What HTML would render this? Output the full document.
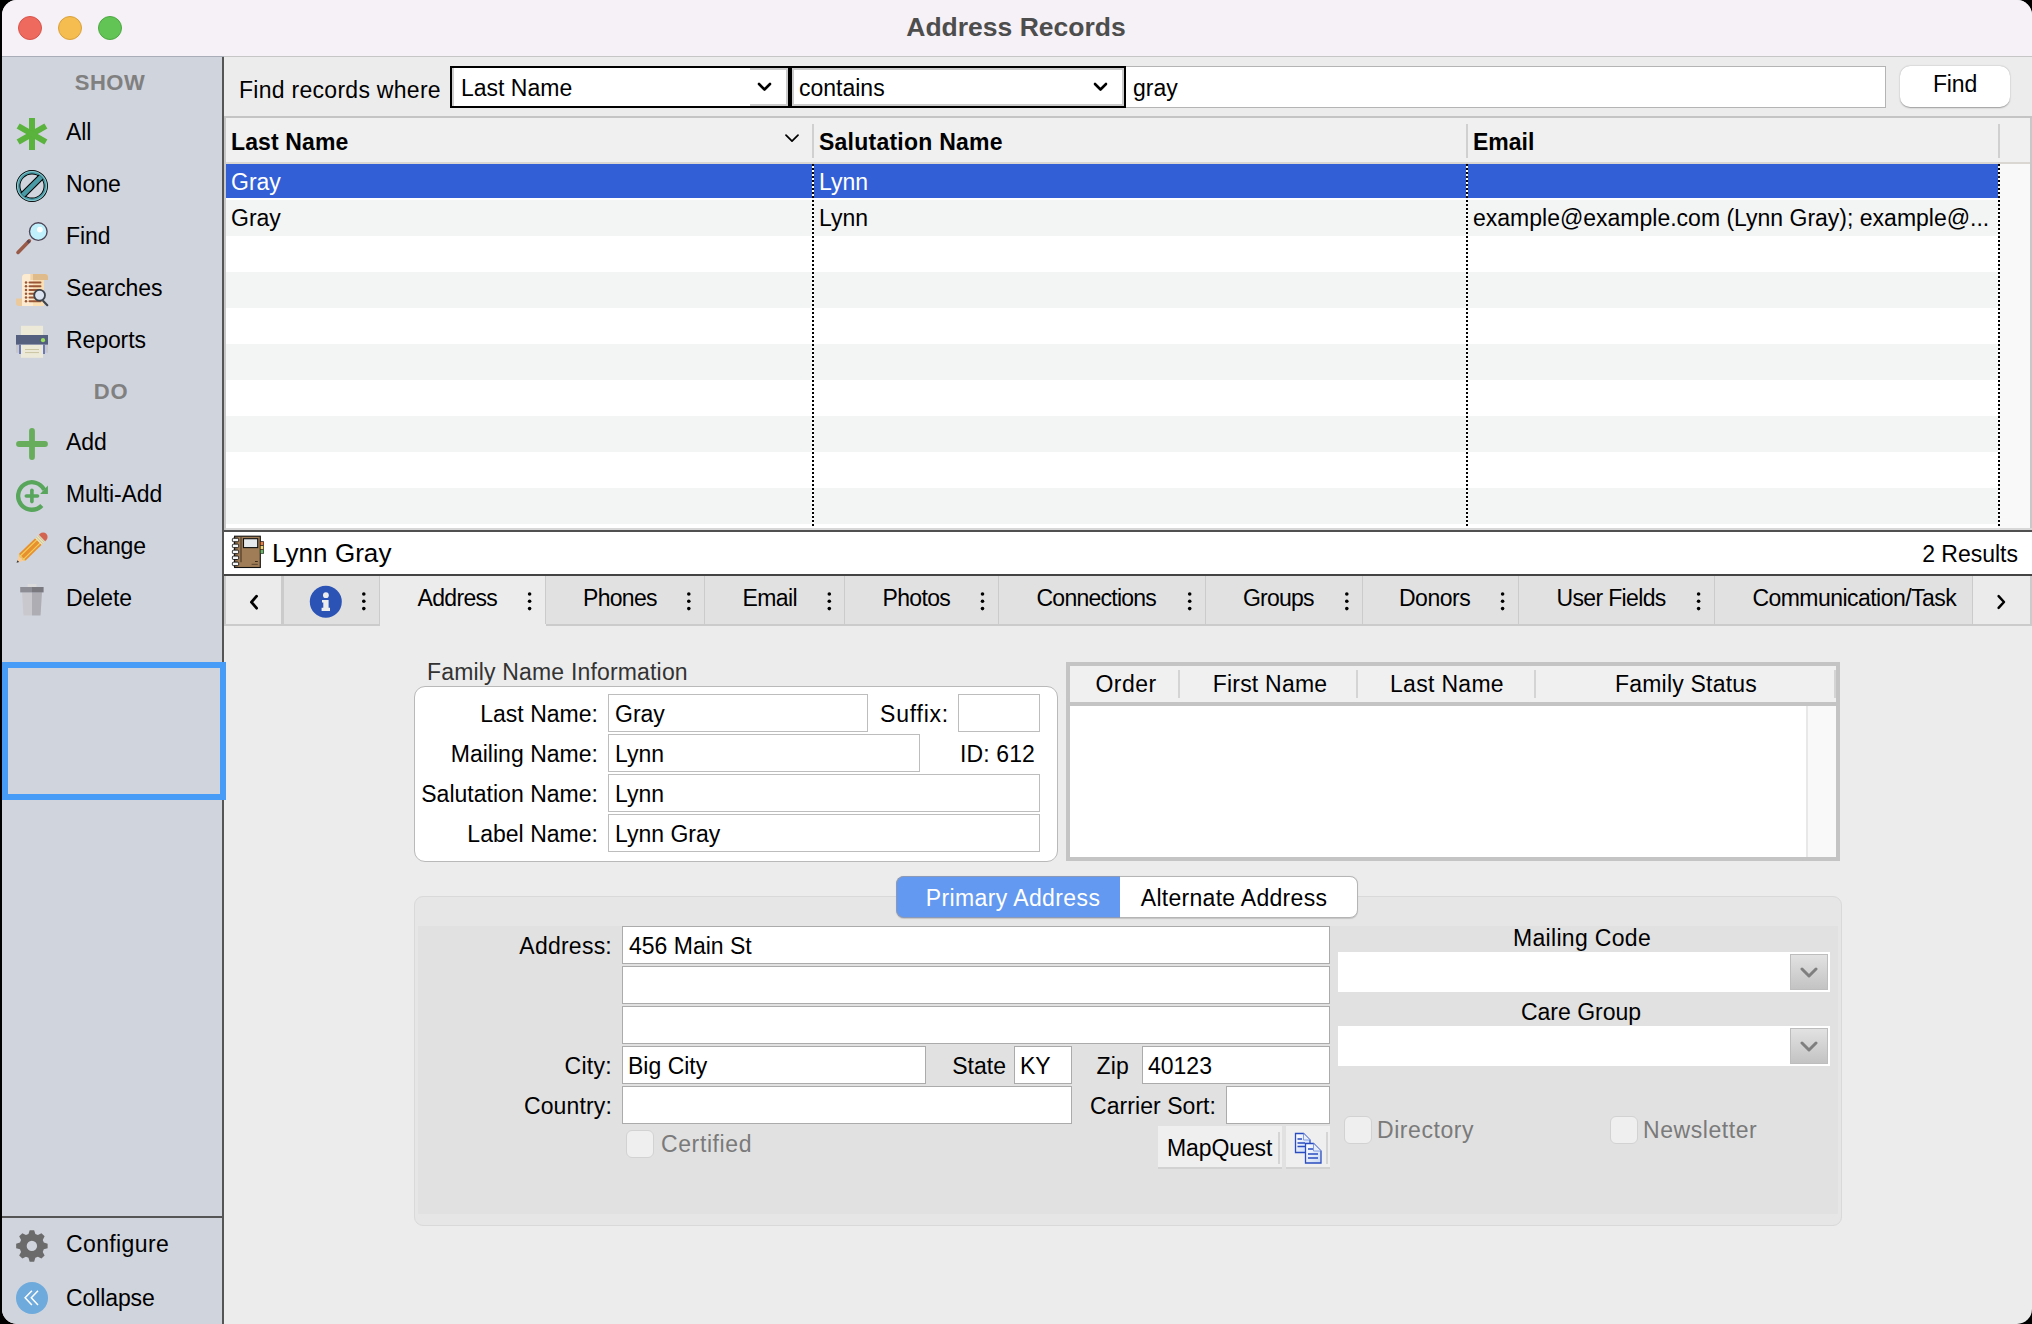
<!DOCTYPE html><html><head><meta charset="utf-8"><style>
html,body{margin:0;padding:0;}
body{width:2032px;height:1324px;background:#000;position:relative;overflow:hidden;font-family:"Liberation Sans", sans-serif;}
#win{position:absolute;left:2px;top:0;width:2030px;height:1324px;border-radius:15px;overflow:hidden;background:#ececec;}
#c{position:absolute;left:-2px;top:0;width:2032px;height:1324px;}
.t{position:absolute;white-space:pre;}
.b{position:absolute;box-sizing:border-box;}
</style></head><body><div id="win"><div id="c">

<div class="b" style="left:0px;top:0px;width:2032px;height:56px;background:#f6f1f6;"></div>
<div class="b" style="left:0px;top:56px;width:224px;height:1px;background:#a9adb7;"></div>
<div class="b" style="left:224px;top:56px;width:1808px;height:1px;background:#c6c6c6;"></div>
<div class="b" style="left:18px;top:16px;width:24px;height:24px;border-radius:50%;background:#ee6a5f;border:1px solid #d9534a;"></div>
<div class="b" style="left:58px;top:16px;width:24px;height:24px;border-radius:50%;background:#f5bd4f;border:1px solid #d9a13a;"></div>
<div class="b" style="left:98px;top:16px;width:24px;height:24px;border-radius:50%;background:#61c454;border:1px solid #4ea843;"></div>
<div class="t" style="left:516px;width:1000px;text-align:center;top:13.57px;font-size:26.5px;line-height:26.5px;color:#4d4d4d;font-weight:bold;">Address Records</div>
<div class="b" style="left:0px;top:57px;width:222px;height:1267px;background:#d0d4dd;"></div>
<div class="b" style="left:222px;top:57px;width:2px;height:1267px;background:#555;"></div>
<div class="b" style="left:0px;top:1216px;width:222px;height:2px;background:#555;"></div>
<div class="t" style="left:-390px;width:1000px;text-align:center;top:72.38px;font-size:22px;line-height:22px;color:#808080;font-weight:bold;letter-spacing:0.47px;">SHOW</div>
<div class="t" style="left:-389px;width:1000px;text-align:center;top:381.38px;font-size:22px;line-height:22px;color:#808080;font-weight:bold;letter-spacing:0.8px;">DO</div>
<div class="t" style="left:66px;top:120.53px;font-size:23px;line-height:23px;color:#000;letter-spacing:-0.1px;">All</div>
<div class="t" style="left:66px;top:172.53px;font-size:23px;line-height:23px;color:#000;letter-spacing:-0.1px;">None</div>
<div class="t" style="left:66px;top:224.53px;font-size:23px;line-height:23px;color:#000;letter-spacing:-0.1px;">Find</div>
<div class="t" style="left:66px;top:276.53px;font-size:23px;line-height:23px;color:#000;letter-spacing:-0.1px;">Searches</div>
<div class="t" style="left:66px;top:328.53px;font-size:23px;line-height:23px;color:#000;letter-spacing:-0.1px;">Reports</div>
<div class="t" style="left:66px;top:430.53px;font-size:23px;line-height:23px;color:#000;letter-spacing:-0.1px;">Add</div>
<div class="t" style="left:66px;top:482.53px;font-size:23px;line-height:23px;color:#000;letter-spacing:-0.1px;">Multi-Add</div>
<div class="t" style="left:66px;top:534.53px;font-size:23px;line-height:23px;color:#000;letter-spacing:-0.1px;">Change</div>
<div class="t" style="left:66px;top:586.53px;font-size:23px;line-height:23px;color:#000;letter-spacing:-0.1px;">Delete</div>
<div class="t" style="left:66px;top:1232.53px;font-size:23px;line-height:23px;color:#000;letter-spacing:0.38px;">Configure</div>
<div class="t" style="left:66px;top:1286.53px;font-size:23px;line-height:23px;color:#000;letter-spacing:-0.1px;">Collapse</div>
<div class="b" style="left:2px;top:662px;width:224px;height:138px;border:6px solid #479cf7;"></div>
<svg class="b" style="left:0;top:0" width="300" height="1324" viewBox="0 0 300 1324"><rect x="29" y="118" width="6" height="32" fill="#5ab33c" transform="rotate(0 32 134)"/><rect x="29" y="118" width="6" height="32" fill="#5ab33c" transform="rotate(60 32 134)"/><rect x="29" y="118" width="6" height="32" fill="#5ab33c" transform="rotate(-60 32 134)"/><circle cx="32" cy="186" r="13.8" fill="none" stroke="#000" stroke-width="4.4"/><circle cx="32" cy="186" r="13.8" fill="none" stroke="#4a9aa5" stroke-width="2.6"/><circle cx="32" cy="186" r="14.7" fill="none" stroke="#bff0f5" stroke-width="0.7" opacity="0.8"/><g transform="rotate(-45 32 186)"><rect x="19" y="182.6" width="26" height="6.8" fill="#000"/><rect x="19" y="183.7" width="26" height="4.6" fill="#4a9aa5"/></g><line x1="18" y1="252.4" x2="29.4" y2="240.8" stroke="#9a5a48" stroke-width="3.6" stroke-linecap="round"/><line x1="27.6" y1="242.4" x2="29.4" y2="240.8" stroke="#5a4550" stroke-width="3.3"/><circle cx="38.3" cy="231.6" r="8.8" fill="#bff0fb" stroke="#4f4658" stroke-width="1.4"/><circle cx="39.9" cy="229.6" r="2.9" fill="#fff"/><path d="M22 306 V278 Q22 274 26 274 H45 Q48 274 48 277 V280 H44 V306 Z" fill="#fadfb5"/><path d="M22 306 V278 Q22 274 26 274 H33 V306 Z" fill="#fcebd1"/><path d="M33 274 H45 Q48 274 48 277 V280 H33 Z" fill="#dfbb8b"/><path d="M30.4 274 H33 V280 H30.4 Z" fill="#f0d3a8"/><path d="M16 298.4 H22 V306 H19 Q16 306 16 303 Z" fill="#ebc99b"/><circle cx="26" cy="282.4" r="1.25" fill="#9a5737"/><line x1="29.5" y1="282.4" x2="40.5" y2="282.4" stroke="#9a5737" stroke-width="2" stroke-linecap="round"/><circle cx="26" cy="286.2" r="1.25" fill="#9a5737"/><line x1="29.5" y1="286.2" x2="40.5" y2="286.2" stroke="#9a5737" stroke-width="2" stroke-linecap="round"/><circle cx="26" cy="289.9" r="1.25" fill="#9a5737"/><line x1="29.5" y1="289.9" x2="40.5" y2="289.9" stroke="#9a5737" stroke-width="2" stroke-linecap="round"/><circle cx="26" cy="293.7" r="1.25" fill="#9a5737"/><line x1="29.5" y1="293.7" x2="40.5" y2="293.7" stroke="#9a5737" stroke-width="2" stroke-linecap="round"/><circle cx="26" cy="297.5" r="1.25" fill="#9a5737"/><line x1="29.5" y1="297.5" x2="40.5" y2="297.5" stroke="#9a5737" stroke-width="2" stroke-linecap="round"/><circle cx="26" cy="301.3" r="1.25" fill="#9a5737"/><line x1="29.5" y1="301.3" x2="40.5" y2="301.3" stroke="#9a5737" stroke-width="2" stroke-linecap="round"/><line x1="43.2" y1="301" x2="47.3" y2="305.2" stroke="#3e444c" stroke-width="2.1" stroke-linecap="round"/><circle cx="39.6" cy="295.2" r="5.4" fill="#dbe2f0" stroke="#3e444c" stroke-width="1.8"/><rect x="21" y="325.8" width="22" height="10" fill="#ede9d8"/><rect x="16" y="335" width="32" height="9.8" fill="#545e7e"/><circle cx="43" cy="340.2" r="2.1" fill="#9be05a"/><rect x="16" y="344.8" width="32" height="8" fill="#c6c8cc"/><rect x="19" y="344.8" width="26" height="9.2" fill="#6a7ab8"/><rect x="21" y="344.8" width="22" height="13" fill="#ede9d8"/><line x1="25" y1="349.5" x2="39" y2="349.5" stroke="#cbc4a2" stroke-width="1"/><line x1="25" y1="352.6" x2="39" y2="352.6" stroke="#cbc4a2" stroke-width="1"/><line x1="19" y1="444" x2="45" y2="444" stroke="#68ad5c" stroke-width="5.8" stroke-linecap="round"/><line x1="32" y1="431" x2="32" y2="457" stroke="#68ad5c" stroke-width="5.8" stroke-linecap="round"/><path d="M44.15 489.76 A13.75 13.75 0 1 0 41.79 505.55" fill="none" stroke="#58a55c" stroke-width="4.3"/><path d="M47.9 485.6 L47.9 494 L40.1 494 L43.3 490.6 Z" fill="#58a55c"/><line x1="26.3" y1="496" x2="37.5" y2="496" stroke="#58a55c" stroke-width="3.6" stroke-linecap="round"/><line x1="31.9" y1="490.3" x2="31.9" y2="501.6" stroke="#58a55c" stroke-width="3.6" stroke-linecap="round"/><g transform="translate(16.6 562.8) rotate(-44.3)"><path d="M0 0 L8.5 -4.7 L8.5 4.7 Z" fill="#f8cc9b"/><path d="M0 0 L2.4 -1.3 L2.4 1.3 Z" fill="#2b3848"/><path d="M8 -4.4 L6.5 -1.5 L8 0 L6.5 1.5 L8 4.4" fill="none" stroke="#e3c04a" stroke-width="0.9"/><rect x="8" y="-4.7" width="22.5" height="9.4" fill="#e8902f"/><rect x="7" y="-2.9" width="23.5" height="1.2" fill="#f0cf5c"/><rect x="7" y="1.7" width="23.5" height="1.2" fill="#f0cf5c"/><rect x="30.5" y="-4.5" width="5" height="9" fill="#f1e7b6"/><rect x="31.6" y="-4.5" width="1" height="9" fill="#c9c6a6"/><rect x="33.8" y="-4.5" width="1" height="9" fill="#c9c6a6"/><path d="M35.5 -4.5 H37 A4.5 4.5 0 0 1 37 4.5 H35.5 Z" fill="#d3644f"/></g><rect x="27.7" y="584" width="8.7" height="3.2" fill="#dcdcdc"/><path d="M22 592.2 H32 V615.6 H23.5 Z" fill="#c9c9cd"/><path d="M32 592.2 H42 L40.5 615.6 H32 Z" fill="#adadb3"/><rect x="20.2" y="587" width="11.8" height="5.4" fill="#8d8d96"/><rect x="32" y="587" width="11.6" height="5.4" fill="#79797f"/><path d="M28.45 1233.99 L29.66 1230.16 L34.14 1230.16 L35.35 1233.99 L37.88 1235.04 L41.44 1233.18 L44.62 1236.36 L42.76 1239.92 L43.81 1242.45 L47.64 1243.66 L47.64 1248.14 L43.81 1249.35 L42.76 1251.88 L44.62 1255.44 L41.44 1258.62 L37.88 1256.76 L35.35 1257.81 L34.14 1261.64 L29.66 1261.64 L28.45 1257.81 L25.92 1256.76 L22.36 1258.62 L19.18 1255.44 L21.04 1251.88 L19.99 1249.35 L16.16 1248.14 L16.16 1243.66 L19.99 1242.45 L21.04 1239.92 L19.18 1236.36 L22.36 1233.18 L25.92 1235.04 Z" fill="#6b6b6b"/><circle cx="31.9" cy="1245.9" r="5.2" fill="#d0d4dd"/><circle cx="32" cy="1298" r="16" fill="#6eaadc"/><path d="M31.9 1290.7 L25.1 1297.8 L31.9 1305 M38 1290.7 L31.3 1297.8 L38 1305" fill="none" stroke="#fff" stroke-width="1.5"/></svg>
<div class="b" style="left:224px;top:57px;width:1808px;height:59px;background:#ececec;"></div>
<div class="b" style="left:224px;top:116px;width:1808px;height:2px;background:#c4c4c4;"></div>
<div class="t" style="left:239px;top:78.53px;font-size:23px;line-height:23px;color:#000;letter-spacing:0.28px;">Find records where</div>
<div class="b" style="left:450px;top:66px;width:340px;height:42px;background:#fff;border:2px solid #000;"></div>
<div class="b" style="left:790px;top:66px;width:336px;height:42px;background:#fff;border:2px solid #000;"></div>
<div class="b" style="left:1126px;top:66px;width:760px;height:42px;background:#fff;border:1px solid #b4b4b4;border-left:none;"></div>
<div class="b" style="left:452px;top:68px;width:2px;height:38px;background:#cfcfcf;"></div>
<div class="b" style="left:750px;top:68px;width:38px;height:2px;background:#cbcbcb;"></div>
<div class="b" style="left:750px;top:104px;width:38px;height:2px;background:#cbcbcb;"></div>
<div class="b" style="left:786px;top:68px;width:2px;height:38px;background:#cbcbcb;"></div>
<div class="b" style="left:792px;top:68px;width:332px;height:38px;border:2px solid #cbcbcb;"></div>
<div class="t" style="left:461px;top:76.53px;font-size:23px;line-height:23px;color:#000;">Last Name</div>
<div class="t" style="left:799px;top:76.53px;font-size:23px;line-height:23px;color:#000;">contains</div>
<div class="t" style="left:1133px;top:76.53px;font-size:23px;line-height:23px;color:#000;">gray</div>
<svg class="b" style="left:757px;top:82px;" width="15" height="10" viewBox="0 0 15 10"><path d="M2 2 L7.5 7.5 L13 2" fill="none" stroke="#000" stroke-width="2.6" stroke-linecap="round" stroke-linejoin="round"/></svg>
<svg class="b" style="left:1093px;top:82px;" width="15" height="10" viewBox="0 0 15 10"><path d="M2 2 L7.5 7.5 L13 2" fill="none" stroke="#000" stroke-width="2.6" stroke-linecap="round" stroke-linejoin="round"/></svg>
<div class="b" style="left:1900px;top:66px;width:110px;height:41px;background:#fff;border-radius:10px;box-shadow:0 0.5px 1.5px rgba(0,0,0,0.35);"></div>
<div class="t" style="left:1455px;width:1000px;text-align:center;top:72.53px;font-size:23px;line-height:23px;color:#000;letter-spacing:-0.15px;">Find</div>
<div class="b" style="left:224px;top:118px;width:1808px;height:412px;background:#fff;"></div>
<div class="b" style="left:224px;top:118px;width:2px;height:412px;background:#c8c8c8;"></div>
<div class="b" style="left:226px;top:118px;width:1804px;height:44px;background:#f0f0f0;"></div>
<div class="b" style="left:226px;top:162px;width:1804px;height:2px;background:#dad7d2;"></div>
<div class="b" style="left:2030px;top:118px;width:2px;height:412px;background:#c8c8c8;"></div>
<div class="b" style="left:2000px;top:164px;width:30px;height:364px;background:#f9f9f9;"></div>
<div class="b" style="left:226px;top:164px;width:1774px;height:34px;background:#335fd6;"></div>
<div class="b" style="left:226px;top:200px;width:1774px;height:36px;background:#f3f4f4;"></div>
<div class="b" style="left:226px;top:272px;width:1774px;height:36px;background:#f3f4f4;"></div>
<div class="b" style="left:226px;top:344px;width:1774px;height:36px;background:#f3f4f4;"></div>
<div class="b" style="left:226px;top:416px;width:1774px;height:36px;background:#f3f4f4;"></div>
<div class="b" style="left:226px;top:488px;width:1774px;height:36px;background:#f3f4f4;"></div>
<div class="b" style="left:226px;top:528px;width:1806px;height:2px;background:#d8d8d8;"></div>
<div class="b" style="left:224px;top:530px;width:1808px;height:2px;background:#505050;"></div>
<div class="t" style="left:231px;top:130.53px;font-size:23px;line-height:23px;color:#000;font-weight:bold;letter-spacing:0.12px;">Last Name</div>
<div class="t" style="left:819px;top:130.53px;font-size:23px;line-height:23px;color:#000;font-weight:bold;letter-spacing:0.24px;">Salutation Name</div>
<div class="t" style="left:1473px;top:130.53px;font-size:23px;line-height:23px;color:#000;font-weight:bold;">Email</div>
<svg class="b" style="left:785px;top:134px;" width="14" height="9" viewBox="0 0 14 9"><path d="M1 1.2 L7 7.2 L13 1.2" fill="none" stroke="#000" stroke-width="1.7" stroke-linecap="round" stroke-linejoin="round"/></svg>
<div class="b" style="left:812px;top:124px;width:2px;height:34px;background:#d0d0d0;"></div>
<div class="b" style="left:812px;top:164px;width:2px;height:364px;background:repeating-linear-gradient(to bottom,#000 0 2px,#fff 2px 4px);"></div>
<div class="b" style="left:1466px;top:124px;width:2px;height:34px;background:#d0d0d0;"></div>
<div class="b" style="left:1466px;top:164px;width:2px;height:364px;background:repeating-linear-gradient(to bottom,#000 0 2px,#fff 2px 4px);"></div>
<div class="b" style="left:1998px;top:124px;width:2px;height:34px;background:#d0d0d0;"></div>
<div class="b" style="left:1998px;top:164px;width:2px;height:364px;background:repeating-linear-gradient(to bottom,#000 0 2px,#fff 2px 4px);"></div>
<div class="t" style="left:231px;top:170.53px;font-size:23px;line-height:23px;color:#fff;">Gray</div>
<div class="t" style="left:819px;top:170.53px;font-size:23px;line-height:23px;color:#fff;">Lynn</div>
<div class="t" style="left:231px;top:206.53px;font-size:23px;line-height:23px;color:#000;">Gray</div>
<div class="t" style="left:819px;top:206.53px;font-size:23px;line-height:23px;color:#000;">Lynn</div>
<div class="t" style="left:1473px;top:206.53px;font-size:23px;line-height:23px;color:#000;">example@example.com (Lynn Gray); example@...</div>
<div class="b" style="left:224px;top:532px;width:1808px;height:42px;background:#fff;"></div>
<div class="b" style="left:224px;top:574px;width:1808px;height:2px;background:#444;"></div>
<div class="t" style="left:272px;top:539.99px;font-size:26px;line-height:26px;color:#000;letter-spacing:0.05px;">Lynn Gray</div>
<svg class="b" style="left:224px;top:532px" width="50" height="42" viewBox="224 532 50 42"><rect x="234.6" y="536.2" width="25.7" height="31.3" fill="#a07d56" stroke="#111" stroke-width="1.1"/><rect x="240.3" y="537.2" width="1.4" height="25" fill="#5a4530"/><rect x="243.5" y="538.7" width="14.2" height="8.9" fill="#e6e9ec" stroke="#111" stroke-width="1.1"/><rect x="232.4" y="538.2" width="6.2" height="3.6" rx="1.2" fill="#f5f7f8" stroke="#111" stroke-width="1"/><rect x="232.4" y="544.1" width="6.2" height="3.6" rx="1.2" fill="#f5f7f8" stroke="#111" stroke-width="1"/><rect x="232.4" y="550.1" width="6.2" height="3.6" rx="1.2" fill="#f5f7f8" stroke="#111" stroke-width="1"/><rect x="232.4" y="556.0" width="6.2" height="3.6" rx="1.2" fill="#f5f7f8" stroke="#111" stroke-width="1"/><rect x="232.4" y="562.1" width="6.2" height="3.6" rx="1.2" fill="#f5f7f8" stroke="#111" stroke-width="1"/><rect x="260.4" y="541.2" width="3.4" height="12.6" fill="#111"/><rect x="260.6" y="541.8" width="2.6" height="3.4" fill="#f07c3c"/><rect x="260.6" y="545.9" width="2.6" height="3.4" fill="#f5d468"/><rect x="260.6" y="550" width="2.6" height="3.4" fill="#66b866"/><line x1="255" y1="561.5" x2="257.8" y2="561.5" stroke="#3a2a1a" stroke-width="1"/><line x1="251.6" y1="564.3" x2="257.8" y2="564.3" stroke="#5a4530" stroke-width="1"/></svg>
<div class="t" style="right:14px;top:542.53px;font-size:23px;line-height:23px;color:#000;letter-spacing:0px;">2 Results</div>
<div class="b" style="left:224px;top:576px;width:1808px;height:50px;background:#ececec;"></div>
<div class="b" style="left:224px;top:576px;width:2px;height:50px;background:#cbcbcb;"></div>
<div class="b" style="left:226px;top:576px;width:56px;height:48px;background:#ebebeb;"></div>
<div class="b" style="left:226px;top:624px;width:56px;height:2px;background:#cbcbcb;"></div>
<div class="b" style="left:281px;top:576px;width:2px;height:50px;background:#cbcbcb;"></div>
<div class="b" style="left:284px;top:576px;width:96px;height:48px;background:#e0e0e0;"></div>
<div class="b" style="left:284px;top:624px;width:96px;height:2px;background:#cbcbcb;"></div>
<div class="b" style="left:379px;top:576px;width:2px;height:50px;background:#cbcbcb;"></div>
<svg class="b" style="left:361px;top:590px;" width="6" height="22" viewBox="0 0 6 22"><circle cx="2.80" cy="4" r="1.8"/><circle cx="2.80" cy="11.3" r="1.8"/><circle cx="2.80" cy="18.6" r="1.8"/></svg>
<div class="b" style="left:380px;top:576px;width:166px;height:50px;background:#ececec;"></div>
<div class="b" style="left:545px;top:576px;width:2px;height:48px;background:#cbcbcb;"></div>
<svg class="b" style="left:527px;top:590px;" width="6" height="22" viewBox="0 0 6 22"><circle cx="2.60" cy="4" r="1.8"/><circle cx="2.60" cy="11.3" r="1.8"/><circle cx="2.60" cy="18.6" r="1.8"/></svg>
<div class="b" style="left:546px;top:576px;width:159px;height:48px;background:#e1e1e1;"></div>
<div class="b" style="left:546px;top:624px;width:159px;height:2px;background:#cbcbcb;"></div>
<div class="b" style="left:704px;top:576px;width:2px;height:50px;background:#cbcbcb;"></div>
<svg class="b" style="left:686px;top:590px;" width="6" height="22" viewBox="0 0 6 22"><circle cx="2.80" cy="4" r="1.8"/><circle cx="2.80" cy="11.3" r="1.8"/><circle cx="2.80" cy="18.6" r="1.8"/></svg>
<div class="b" style="left:705px;top:576px;width:140px;height:48px;background:#e1e1e1;"></div>
<div class="b" style="left:705px;top:624px;width:140px;height:2px;background:#cbcbcb;"></div>
<div class="b" style="left:844px;top:576px;width:2px;height:50px;background:#cbcbcb;"></div>
<svg class="b" style="left:826px;top:590px;" width="6" height="22" viewBox="0 0 6 22"><circle cx="3.30" cy="4" r="1.8"/><circle cx="3.30" cy="11.3" r="1.8"/><circle cx="3.30" cy="18.6" r="1.8"/></svg>
<div class="b" style="left:845px;top:576px;width:154px;height:48px;background:#e1e1e1;"></div>
<div class="b" style="left:845px;top:624px;width:154px;height:2px;background:#cbcbcb;"></div>
<div class="b" style="left:998px;top:576px;width:2px;height:50px;background:#cbcbcb;"></div>
<svg class="b" style="left:979px;top:590px;" width="6" height="22" viewBox="0 0 6 22"><circle cx="3.50" cy="4" r="1.8"/><circle cx="3.50" cy="11.3" r="1.8"/><circle cx="3.50" cy="18.6" r="1.8"/></svg>
<div class="b" style="left:999px;top:576px;width:207px;height:48px;background:#e1e1e1;"></div>
<div class="b" style="left:999px;top:624px;width:207px;height:2px;background:#cbcbcb;"></div>
<div class="b" style="left:1205px;top:576px;width:2px;height:50px;background:#cbcbcb;"></div>
<svg class="b" style="left:1187px;top:590px;" width="6" height="22" viewBox="0 0 6 22"><circle cx="2.70" cy="4" r="1.8"/><circle cx="2.70" cy="11.3" r="1.8"/><circle cx="2.70" cy="18.6" r="1.8"/></svg>
<div class="b" style="left:1206px;top:576px;width:157px;height:48px;background:#e1e1e1;"></div>
<div class="b" style="left:1206px;top:624px;width:157px;height:2px;background:#cbcbcb;"></div>
<div class="b" style="left:1362px;top:576px;width:2px;height:50px;background:#cbcbcb;"></div>
<svg class="b" style="left:1344px;top:590px;" width="6" height="22" viewBox="0 0 6 22"><circle cx="2.80" cy="4" r="1.8"/><circle cx="2.80" cy="11.3" r="1.8"/><circle cx="2.80" cy="18.6" r="1.8"/></svg>
<div class="b" style="left:1363px;top:576px;width:156px;height:48px;background:#e1e1e1;"></div>
<div class="b" style="left:1363px;top:624px;width:156px;height:2px;background:#cbcbcb;"></div>
<div class="b" style="left:1518px;top:576px;width:2px;height:50px;background:#cbcbcb;"></div>
<svg class="b" style="left:1500px;top:590px;" width="6" height="22" viewBox="0 0 6 22"><circle cx="2.60" cy="4" r="1.8"/><circle cx="2.60" cy="11.3" r="1.8"/><circle cx="2.60" cy="18.6" r="1.8"/></svg>
<div class="b" style="left:1519px;top:576px;width:196px;height:48px;background:#e1e1e1;"></div>
<div class="b" style="left:1519px;top:624px;width:196px;height:2px;background:#cbcbcb;"></div>
<div class="b" style="left:1714px;top:576px;width:2px;height:50px;background:#cbcbcb;"></div>
<svg class="b" style="left:1696px;top:590px;" width="6" height="22" viewBox="0 0 6 22"><circle cx="2.60" cy="4" r="1.8"/><circle cx="2.60" cy="11.3" r="1.8"/><circle cx="2.60" cy="18.6" r="1.8"/></svg>
<div class="b" style="left:1715px;top:576px;width:258px;height:48px;background:#e1e1e1;"></div>
<div class="b" style="left:1715px;top:624px;width:258px;height:2px;background:#cbcbcb;"></div>
<div class="b" style="left:1972px;top:576px;width:2px;height:50px;background:#cbcbcb;"></div>
<div class="b" style="left:1973px;top:576px;width:57px;height:48px;background:#ebebeb;"></div>
<div class="b" style="left:1973px;top:624px;width:57px;height:2px;background:#cbcbcb;"></div>
<div class="b" style="left:2030px;top:576px;width:2px;height:50px;background:#cbcbcb;"></div>
<div class="b" style="left:282px;top:576px;width:2px;height:50px;background:#cbcbcb;"></div>
<div class="t" style="left:417.6px;top:586.53px;font-size:23px;line-height:23px;color:#000;letter-spacing:-0.7px;">Address</div>
<div class="t" style="left:583px;top:586.53px;font-size:23px;line-height:23px;color:#000;letter-spacing:-0.7px;">Phones</div>
<div class="t" style="left:742.5px;top:586.53px;font-size:23px;line-height:23px;color:#000;letter-spacing:-0.6px;">Email</div>
<div class="t" style="left:882.5px;top:586.53px;font-size:23px;line-height:23px;color:#000;letter-spacing:-0.65px;">Photos</div>
<div class="t" style="left:1036.5px;top:586.53px;font-size:23px;line-height:23px;color:#000;letter-spacing:-0.75px;">Connections</div>
<div class="t" style="left:1243px;top:586.53px;font-size:23px;line-height:23px;color:#000;letter-spacing:-0.8px;">Groups</div>
<div class="t" style="left:1399px;top:586.53px;font-size:23px;line-height:23px;color:#000;letter-spacing:-0.5px;">Donors</div>
<div class="t" style="left:1556.5px;top:586.53px;font-size:23px;line-height:23px;color:#000;letter-spacing:-0.65px;">User Fields</div>
<div class="t" style="left:1752.4px;top:586.53px;font-size:23px;line-height:23px;color:#000;letter-spacing:-0.54px;">Communication/Task</div>
<svg class="b" style="left:246px;top:592px;" width="14" height="20" viewBox="0 0 14 20"><path d="M10.6 4.2 L5.4 10.2 L10.6 16.2" fill="none" stroke="#000" stroke-width="2.8" stroke-linecap="round" stroke-linejoin="round"/></svg>
<svg class="b" style="left:1994px;top:592px;" width="14" height="20" viewBox="0 0 14 20"><path d="M4.6 4.2 L10 10 L4.6 15.8" fill="none" stroke="#000" stroke-width="2.5" stroke-linecap="round" stroke-linejoin="round"/></svg>
<svg class="b" style="left:309px;top:585px;" width="34" height="34" viewBox="0 0 34 34"><circle cx="16.8" cy="16.7" r="16" fill="#2a53b5"/><circle cx="16.9" cy="10.2" r="2.9" fill="#ececec"/><path d="M13 15 H19.6 V22.8 H21 V26 H12.6 V22.8 H14.3 V17.6 H13 Z" fill="#ececec"/></svg>
<div class="t" style="left:427px;top:660.53px;font-size:23px;line-height:23px;color:#333;letter-spacing:0.17px;">Family Name Information</div>
<div class="b" style="left:414px;top:686px;width:644px;height:176px;background:#fff;border:1px solid #b9b9b9;border-radius:11px;"></div>
<div class="t" style="right:1434px;top:702.53px;font-size:23px;line-height:23px;color:#000;letter-spacing:0.02px;">Last Name:</div>
<div class="b" style="left:608px;top:694px;width:260px;height:38px;background:#fff;border:1px solid #bdbdbd;"></div>
<div class="t" style="left:615px;top:702.53px;font-size:23px;line-height:23px;color:#000;">Gray</div>
<div class="t" style="right:1434px;top:742.53px;font-size:23px;line-height:23px;color:#000;letter-spacing:0.02px;">Mailing Name:</div>
<div class="b" style="left:608px;top:734px;width:312px;height:38px;background:#fff;border:1px solid #bdbdbd;"></div>
<div class="t" style="left:615px;top:742.53px;font-size:23px;line-height:23px;color:#000;">Lynn</div>
<div class="t" style="right:1434px;top:782.53px;font-size:23px;line-height:23px;color:#000;letter-spacing:0.02px;">Salutation Name:</div>
<div class="b" style="left:608px;top:774px;width:432px;height:38px;background:#fff;border:1px solid #bdbdbd;"></div>
<div class="t" style="left:615px;top:782.53px;font-size:23px;line-height:23px;color:#000;">Lynn</div>
<div class="t" style="right:1434px;top:822.53px;font-size:23px;line-height:23px;color:#000;letter-spacing:0.02px;">Label Name:</div>
<div class="b" style="left:608px;top:814px;width:432px;height:38px;background:#fff;border:1px solid #bdbdbd;"></div>
<div class="t" style="left:615px;top:822.53px;font-size:23px;line-height:23px;color:#000;">Lynn Gray</div>
<div class="t" style="right:1083px;top:702.53px;font-size:23px;line-height:23px;color:#000;letter-spacing:0.77px;">Suffix:</div>
<div class="b" style="left:958px;top:694px;width:82px;height:38px;background:#fff;border:1px solid #bdbdbd;"></div>
<div class="t" style="right:997px;top:742.53px;font-size:23px;line-height:23px;color:#000;letter-spacing:0.12px;">ID: 612</div>
<div class="b" style="left:1066px;top:662px;width:774px;height:199px;background:#fff;border:4px solid #c4c4c4;"></div>
<div class="b" style="left:1070px;top:666px;width:766px;height:36px;background:#f0f0f0;"></div>
<div class="b" style="left:1070px;top:702px;width:766px;height:4px;background:#c4c4c4;"></div>
<div class="b" style="left:1806px;top:706px;width:30px;height:151px;background:#f9f9f9;border-left:2px solid #e8e8e8;"></div>
<div class="b" style="left:1178px;top:670px;width:2px;height:28px;background:#d4d4d4;"></div>
<div class="b" style="left:1356px;top:670px;width:2px;height:28px;background:#d4d4d4;"></div>
<div class="b" style="left:1534px;top:670px;width:2px;height:28px;background:#d4d4d4;"></div>
<div class="b" style="left:1834px;top:670px;width:2px;height:28px;background:#d4d4d4;"></div>
<div class="t" style="left:626px;width:1000px;text-align:center;top:672.53px;font-size:23px;line-height:23px;color:#000;letter-spacing:0.45px;">Order</div>
<div class="t" style="left:770px;width:1000px;text-align:center;top:672.53px;font-size:23px;line-height:23px;color:#000;letter-spacing:0.22px;">First Name</div>
<div class="t" style="left:947px;width:1000px;text-align:center;top:672.53px;font-size:23px;line-height:23px;color:#000;letter-spacing:0.3px;">Last Name</div>
<div class="t" style="left:1186px;width:1000px;text-align:center;top:672.53px;font-size:23px;line-height:23px;color:#000;letter-spacing:0.21px;">Family Status</div>
<div class="b" style="left:414px;top:896px;width:1428px;height:330px;background:#e6e6e6;border:1px solid #d9d9d9;border-radius:9px;"></div>
<div class="b" style="left:418px;top:926px;width:1420px;height:288px;background:#e1e1e1;"></div>
<div class="b" style="left:896px;top:876px;width:462px;height:42px;background:#fff;border:1px solid #b5b5b5;border-radius:8px;box-shadow:0 0.5px 1px rgba(0,0,0,0.15);"></div>
<div class="b" style="left:896px;top:876px;width:224px;height:42px;background:#6399f0;border-radius:8px 0 0 8px;border:1px solid #8a9ab8;border-right:none;"></div>
<div class="t" style="left:513px;width:1000px;text-align:center;top:886.53px;font-size:23px;line-height:23px;color:#fff;letter-spacing:0.39px;">Primary Address</div>
<div class="t" style="left:734px;width:1000px;text-align:center;top:886.53px;font-size:23px;line-height:23px;color:#000;letter-spacing:0.29px;">Alternate Address</div>
<div class="t" style="right:1420px;top:934.53px;font-size:23px;line-height:23px;color:#000;letter-spacing:0.24px;">Address:</div>
<div class="b" style="left:622px;top:926px;width:708px;height:38px;background:#fff;border:1px solid #ababab;"></div>
<div class="b" style="left:622px;top:966px;width:708px;height:38px;background:#fff;border:1px solid #ababab;"></div>
<div class="b" style="left:622px;top:1006px;width:708px;height:38px;background:#fff;border:1px solid #ababab;"></div>
<div class="t" style="left:629px;top:934.53px;font-size:23px;line-height:23px;color:#000;">456 Main St</div>
<div class="t" style="right:1420px;top:1054.53px;font-size:23px;line-height:23px;color:#000;letter-spacing:0.3px;">City:</div>
<div class="b" style="left:622px;top:1046px;width:304px;height:38px;background:#fff;border:1px solid #ababab;"></div>
<div class="t" style="left:628px;top:1054.53px;font-size:23px;line-height:23px;color:#000;">Big City</div>
<div class="t" style="right:1026px;top:1054.53px;font-size:23px;line-height:23px;color:#000;letter-spacing:0px;">State</div>
<div class="b" style="left:1014px;top:1046px;width:58px;height:38px;background:#fff;border:1px solid #ababab;"></div>
<div class="t" style="left:1020px;top:1054.53px;font-size:23px;line-height:23px;color:#000;">KY</div>
<div class="t" style="right:903px;top:1054.53px;font-size:23px;line-height:23px;color:#000;letter-spacing:0.2px;">Zip</div>
<div class="b" style="left:1142px;top:1046px;width:188px;height:38px;background:#fff;border:1px solid #ababab;"></div>
<div class="t" style="left:1148px;top:1054.53px;font-size:23px;line-height:23px;color:#000;">40123</div>
<div class="t" style="right:1420px;top:1094.53px;font-size:23px;line-height:23px;color:#000;letter-spacing:0.15px;">Country:</div>
<div class="b" style="left:622px;top:1086px;width:450px;height:38px;background:#fff;border:1px solid #ababab;"></div>
<div class="t" style="right:816px;top:1094.53px;font-size:23px;line-height:23px;color:#000;letter-spacing:0.05px;">Carrier Sort:</div>
<div class="b" style="left:1226px;top:1086px;width:104px;height:38px;background:#fff;border:1px solid #ababab;"></div>
<div class="b" style="left:626px;top:1130px;width:28px;height:28px;background:#efefef;border:1px solid #d2d2d2;border-radius:6px;"></div>
<div class="t" style="left:661px;top:1132.53px;font-size:23px;line-height:23px;color:#7a7a7a;letter-spacing:0.61px;">Certified</div>
<div class="b" style="left:1158px;top:1126px;width:124px;height:43px;background:#efefef;border-bottom:2px solid #d2d2d2;"></div>
<div class="b" style="left:1278px;top:1132px;width:2px;height:32px;background:#d5d5d5;"></div>
<div class="t" style="left:1167px;top:1136.53px;font-size:23px;line-height:23px;color:#000;letter-spacing:-0.1px;">MapQuest</div>
<div class="b" style="left:1286px;top:1126px;width:44px;height:43px;background:#efefef;border-bottom:2px solid #d2d2d2;"></div>
<div class="b" style="left:1326px;top:1132px;width:2px;height:32px;background:#d5d5d5;"></div>
<svg class="b" style="left:1293px;top:1131px;" width="32" height="34" viewBox="0 0 32 34"><defs><linearGradient id="dg" x1="0" y1="0" x2="1" y2="1"><stop offset="0" stop-color="#fff"/><stop offset="1" stop-color="#c8d8f4"/></linearGradient></defs><path d="M2.5 2.5 H10.5 L17 9 V21.5 H2.5 Z" fill="url(#dg)" stroke="#2a4cc0" stroke-width="1.3"/><path d="M10.5 2.5 V9 H17" fill="#e8eefa" stroke="#6a86d8" stroke-width="0.8"/><path d="M4.5 8 H9 M4.5 12 H12 M4.5 15.5 H12" stroke="#2a4cc0" stroke-width="1.6"/><path d="M12.5 12.5 H20.5 L28 20 V32 H12.5 Z" fill="url(#dg)" stroke="#2a4cc0" stroke-width="1.3"/><path d="M20.5 12.5 V20 H28" fill="#e8eefa" stroke="#6a86d8" stroke-width="0.8"/><path d="M15 18 H20 M15 23 H25 M15 27 H25" stroke="#2a4cc0" stroke-width="1.6"/></svg>
<div class="t" style="left:1082px;width:1000px;text-align:center;top:926.53px;font-size:23px;line-height:23px;color:#000;letter-spacing:0.33px;">Mailing Code</div>
<div class="t" style="left:1081px;width:1000px;text-align:center;top:1000.53px;font-size:23px;line-height:23px;color:#000;">Care Group</div>
<div class="b" style="left:1338px;top:952px;width:492px;height:40px;background:#fff;"></div>
<div class="b" style="left:1790px;top:954px;width:38px;height:36px;background:linear-gradient(#e2e2e2,#c3c3c3);border:1px solid #bdbdbd;"></div>
<svg class="b" style="left:1800px;top:967px;" width="18" height="11" viewBox="0 0 18 11"><path d="M2 2 L9 9 L16 2" fill="none" stroke="#7f7f7f" stroke-width="3" stroke-linecap="round" stroke-linejoin="round"/></svg>
<div class="b" style="left:1338px;top:1026px;width:492px;height:40px;background:#fff;"></div>
<div class="b" style="left:1790px;top:1028px;width:38px;height:36px;background:linear-gradient(#e2e2e2,#c3c3c3);border:1px solid #bdbdbd;"></div>
<svg class="b" style="left:1800px;top:1041px;" width="18" height="11" viewBox="0 0 18 11"><path d="M2 2 L9 9 L16 2" fill="none" stroke="#7f7f7f" stroke-width="3" stroke-linecap="round" stroke-linejoin="round"/></svg>
<div class="b" style="left:1344px;top:1116px;width:28px;height:28px;background:#efefef;border:1px solid #d2d2d2;border-radius:6px;"></div>
<div class="t" style="left:1377px;top:1118.53px;font-size:23px;line-height:23px;color:#7a7a7a;letter-spacing:0.57px;">Directory</div>
<div class="b" style="left:1610px;top:1116px;width:28px;height:28px;background:#efefef;border:1px solid #d2d2d2;border-radius:6px;"></div>
<div class="t" style="left:1643px;top:1118.53px;font-size:23px;line-height:23px;color:#7a7a7a;letter-spacing:0.57px;">Newsletter</div>
</div></div></body></html>
